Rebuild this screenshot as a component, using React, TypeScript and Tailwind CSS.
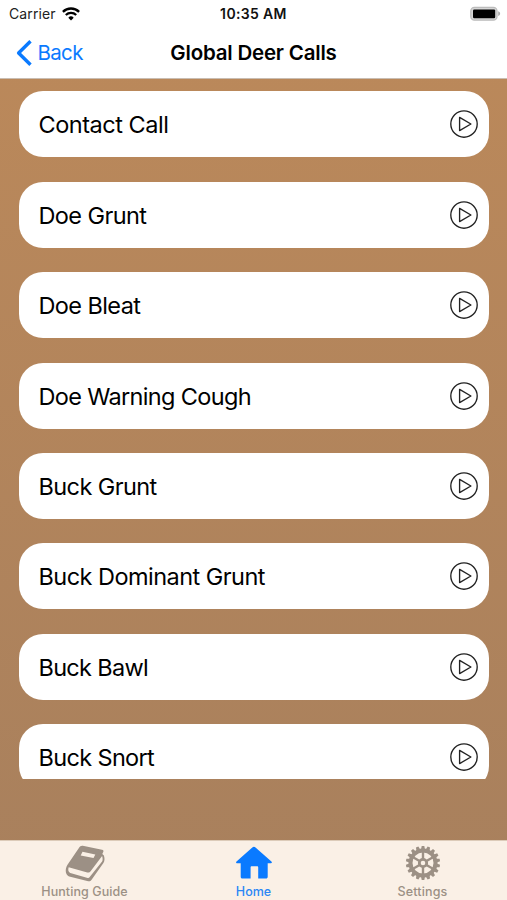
import clsx from "clsx";

const calls = [
  { name: "Contact Call", tracking: "tracking-[-0.47px]" },
  { name: "Doe Grunt", tracking: "tracking-[-0.6px]" },
  { name: "Doe Bleat", tracking: "tracking-[-0.6px]" },
  { name: "Doe Warning Cough", tracking: "tracking-[-0.66px]" },
  { name: "Buck Grunt", tracking: "tracking-[-0.6px]" },
  { name: "Buck Dominant Grunt", tracking: "tracking-[-0.54px]" },
  { name: "Buck Bawl", tracking: "tracking-[-0.7px]" },
  { name: "Buck Snort", tracking: "tracking-[-0.65px]" },
];

const WifiIcon = () => (
  <svg width="18" height="14" viewBox="0 0 18 14" fill="none" stroke="#000">
    <path d="M0.9 4.9a11.4 11.4 0 0 1 16.2 0" strokeWidth="2.3" />
    <path d="M3.8 8a7.4 7.4 0 0 1 10.4 0" strokeWidth="2.2" />
    <path d="M9 13.6 6.3 10.7a3.8 3.8 0 0 1 5.4 0z" fill="#000" stroke="none" />
  </svg>
);

const BatteryIcon = () => (
  <svg width="31" height="16" viewBox="0 0 31 16">
    <rect x="0.8" y="1.4" width="26.2" height="12.8" rx="3.6" fill="#d6d6d6" stroke="#bcbcbc" strokeWidth="1.3" />
    <rect x="3" y="3.4" width="22.2" height="8.8" rx="1.2" fill="#000" />
    <path d="M28.2 5.3c2.6 1 2.6 3.8 0 4.8z" fill="#aaa" />
  </svg>
);

const PlayIcon = () => (
  <svg width="28" height="28" viewBox="0 0 28 28" fill="none" stroke="#222" strokeWidth="1.35">
    <circle cx="14" cy="14" r="13.2" />
    <path d="M9.6 7.4v13.2L20.9 14z" strokeLinejoin="round" />
  </svg>
);

const BookIcon = () => (
  <svg width="40" height="37" viewBox="0 0 40 37" fill="#9c9085">
    <path
      fillRule="evenodd"
      d="M17.8 0.8 37 4.8c1.3.3 1.9 1.1 1.2 2.3l-.9 1.9 1.6 1.5c.8 2.6 1 5.2-.5 7.4L26.4 34.9c-.8 1.2-1.7 1.7-3.2 1.3L4.2 31.4C1.5 30.6.3 27.2.9 23.8c.2-1.6.8-2.9 1.6-4.1L13.9 3c1.1-1.7 2.3-2.6 3.9-2.2zM17.5 6.8 15.7 10.4 28.5 13.1 30.3 9.5zM3.7 22.3c-.9 2.3-.4 5 1.6 5.6l17.4 5c.8.2 1.4 0 1.8-.6L37.1 16.5c.8-1.2.6-3.8 0-5.6L25.6 26.2c-.8 1.1-1.8 1.6-3.3 1.2z"
    />
  </svg>
);

const HomeIcon = () => (
  <svg width="38" height="34" viewBox="0 0 38 34" fill="#0a7aff">
    <path d="M17.3 1.4c1-.9 2.2-.9 3.2 0l15.9 14.2c.9.9.5 1.7-.6 1.7h-3.1v13.4c0 1.2-.6 1.8-1.8 1.8h-7.7V21.4c0-.9-.3-1.2-1.2-1.2h-5.2c-.9 0-1.2.3-1.2 1.2v11.1H7.5c-1.2 0-1.8-.6-1.8-1.8V17.3H2.3c-1.3 0-1.6-.9-.8-1.7z" />
  </svg>
);

const teeth = Array.from({ length: 18 }, (_, i) => i * 20);
const spokes = [0, 60, 120, 180, 240, 300];

const GearIcon = () => (
  <svg width="36" height="36" viewBox="-18 -18 36 36" fill="#9c9085">
    {teeth.map((angle) => (
      <path key={angle} d="M-2.1-13 -1.3-17.1h2.6L2.1-13z" transform={`rotate(${angle})`} />
    ))}
    <circle r="12.5" fill="none" stroke="#9c9085" strokeWidth="4" />
    {spokes.map((angle) => (
      <rect key={angle} x="-1.2" y="-12" width="2.4" height="9" transform={`rotate(${angle})`} />
    ))}
    <circle r="3.7" fill="none" stroke="#9c9085" strokeWidth="2.8" />
  </svg>
);

const tabs = [
  { label: "Hunting Guide", icon: <BookIcon />, tracking: "tracking-[0.08px]" },
  { label: "Home", icon: <HomeIcon />, active: true, tracking: "tracking-[0px]" },
  { label: "Settings", icon: <GearIcon />, tracking: "tracking-[0.15px]" },
];

const App = () => {
  return (
    <div className="flex h-[900px] w-[507px] flex-col overflow-hidden bg-linear-to-b from-[#bc895a] to-[#a8805d] font-[Inter,sans-serif] text-black">
      <header className="h-[79px] shrink-0 border-b border-[#c9bdb2] bg-white">
        <div className="grid h-[27px] grid-cols-3 items-center">
          <div className="flex items-center gap-[6px] pl-[9px]">
            <span className="text-[14px] leading-none tracking-[0.1px] text-[#222]">Carrier</span>
            <WifiIcon />
          </div>
          <span className="text-center text-[14px] leading-none font-semibold tracking-[0.35px] text-[#111]">
            10:35 AM
          </span>
          <div className="flex justify-end pr-[6px]">
            <BatteryIcon />
          </div>
        </div>
        <div className="grid h-[51px] grid-cols-[1fr_auto_1fr] items-center">
          <button className="flex items-center gap-[4.5px] pl-4 text-[#0a7aff]">
            <svg width="17" height="28" viewBox="0 0 17 28" fill="none" stroke="currentColor" strokeWidth="3.4">
              <path d="M14.5 2.2 2.6 14l11.9 11.8" strokeLinejoin="round" />
            </svg>
            <span className="pt-[2px] text-[20.5px] leading-none tracking-[-0.65px]">Back</span>
          </button>
          <h1 className="pt-px text-[20.5px] leading-none font-semibold tracking-[-0.2px]">Global Deer Calls</h1>
        </div>
      </header>

      <main className="flex h-[700px] shrink-0 flex-col gap-[24.43px] overflow-hidden pt-[12.3px] pr-[18px] pl-[19px]">
        {calls.map((call) => (
          <div
            key={call.name}
            className="flex h-[66px] shrink-0 items-center justify-between rounded-[24px] bg-white pr-[11px] pl-[19.5px]"
          >
            <span className={clsx("pt-[2px] text-[23.5px] leading-[24px]", call.tracking)}>{call.name}</span>
            <PlayIcon />
          </div>
        ))}
      </main>

      <nav className="mt-auto grid h-[60px] grid-cols-3 border-t border-[#dccbb9] bg-[#faf0e6]">
        {tabs.map((tab) => (
          <div
            key={tab.label}
            className={clsx("flex flex-col items-center", tab.active ? "text-[#2b87f5]" : "text-[#9c9085]")}
          >
            <div className="flex h-[43px] items-center pt-[1px]">{tab.icon}</div>
            <span className={clsx("text-[12.5px] leading-[15px] font-medium", tab.tracking)}>{tab.label}</span>
          </div>
        ))}
      </nav>
    </div>
  );
};

export default App;
